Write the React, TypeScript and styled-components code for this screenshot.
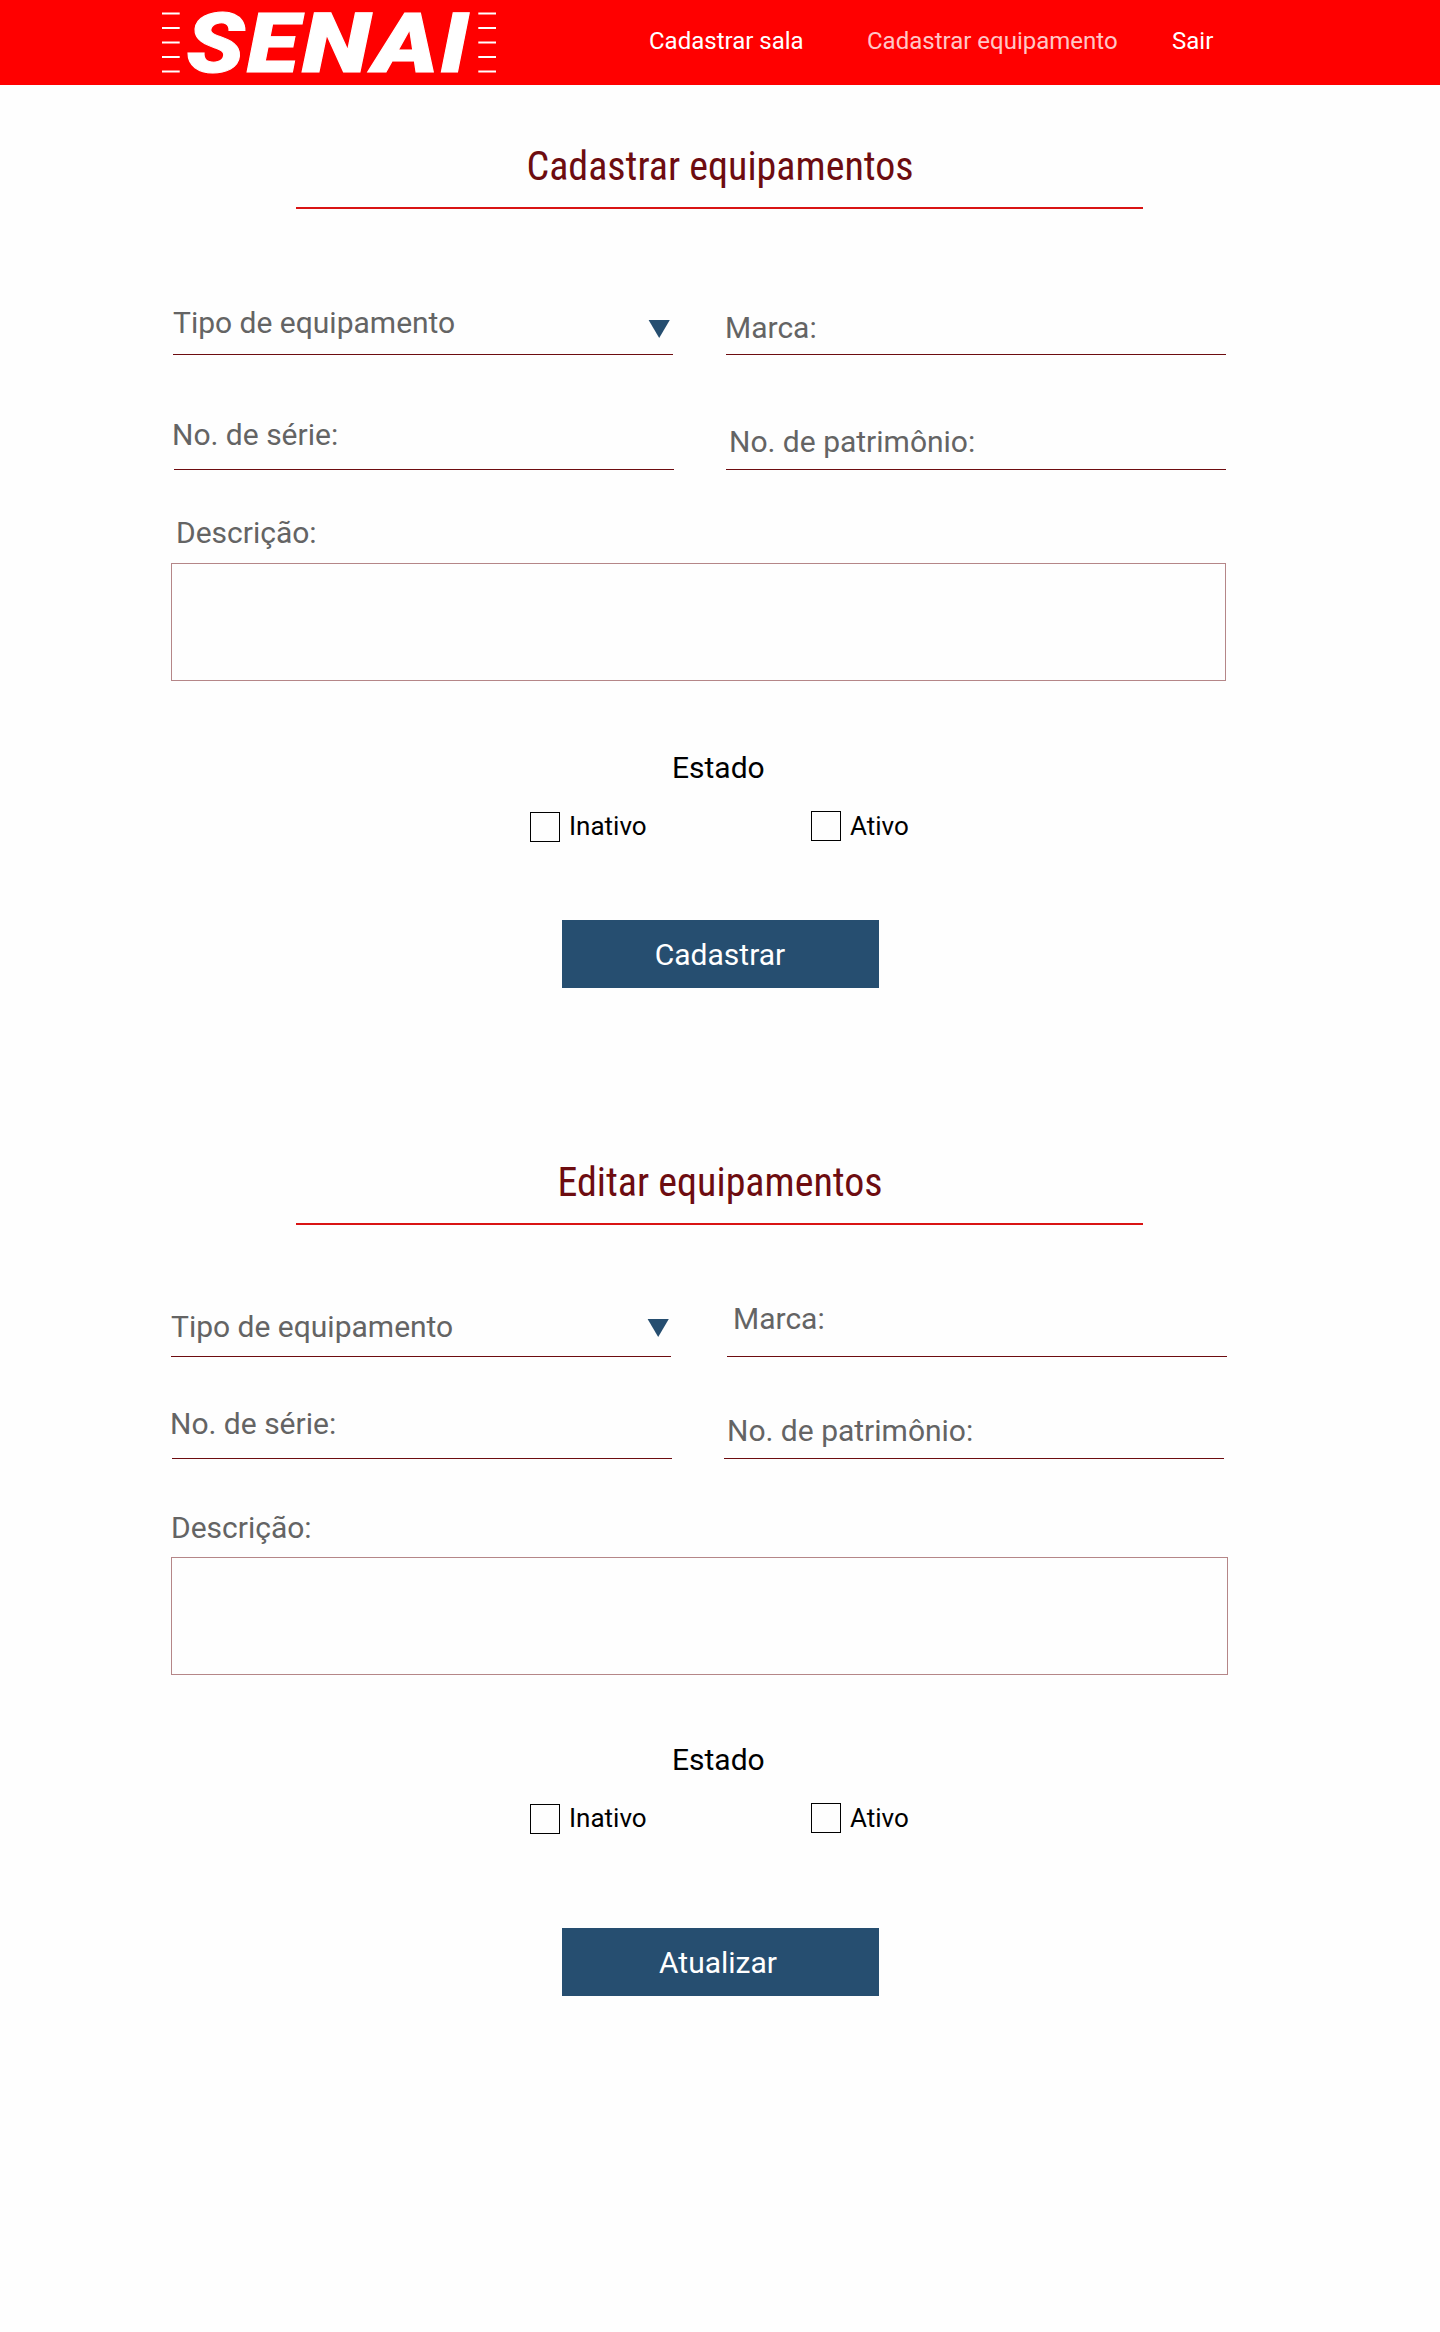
import React from "react";
import styled, { createGlobalStyle } from "styled-components";

const GlobalStyle = createGlobalStyle`
  *, *::before, *::after { box-sizing: border-box; }
  body { margin: 0; background: #fefefe; font-family: Roboto, "Liberation Sans", sans-serif; }
`;

const Page = styled.div`
  width: 1440px;
  height: 2332px;
  background: #fefefe;
`;

const Header = styled.header`
  display: flex;
  height: 85px;
  padding-left: 162px;
  background: #ff0000;
`;

const Logo = styled.svg`
  flex: none;
  overflow: visible;
  width: 334px;
  height: 85px;
  margin-right: 153px;
`;

const LogoLetter = styled.text`
  font-family: Roboto, "Liberation Sans", sans-serif;
  font-weight: 900;
  font-style: italic;
  font-size: 83px;
  fill: #ffffff;
  stroke: #ffffff;
  stroke-width: 1px;
`;

const Nav = styled.nav`
  display: grid;
  grid-template-columns: 218px 305px auto;
  padding-top: 27px;
`;

const NavLink = styled.a<{ $current?: boolean }>`
  font-size: 24px;
  line-height: 28px;
  white-space: nowrap;
  text-decoration: none;
  color: ${(p) => (p.$current ? "#ffc6c6" : "#ffffff")};
`;

const Section = styled.section<{ $top: number }>`
  display: flex;
  flex-direction: column;
  align-items: flex-start;
  padding-top: ${(p) => p.$top}px;
`;

const Title = styled.h1`
  width: 847px;
  margin: 0 0 0 296px;
  padding: 0 0 17px 1px;
  border-bottom: 2px solid #d91414;
  font-family: "Roboto Condensed", Roboto, sans-serif;
  font-stretch: condensed;
  font-weight: 400;
  font-size: 40px;
  line-height: 47px;
  text-align: center;
  color: #6d0c10;
`;

const Row = styled.div<{ $top: number; $left: number; $gap: number }>`
  display: flex;
  gap: ${(p) => p.$gap}px;
  margin: ${(p) => p.$top}px 0 0 ${(p) => p.$left}px;
`;

const Field = styled.div`
  display: flex;
  align-items: flex-end;
  justify-content: space-between;
  width: 500px;
  height: 60px;
  border-bottom: 1px solid #6d0c10;
`;

const Label = styled.label<{ $inset: number; $lift: number }>`
  margin: 0 0 ${(p) => p.$lift}px ${(p) => p.$inset}px;
  font-size: 30px;
  line-height: 35px;
  white-space: nowrap;
  color: #646464;
`;

const Arrow = styled.svg<{ $lift: number; $right: number }>`
  width: 22px;
  height: 18px;
  margin: 0 ${(p) => p.$right}px ${(p) => p.$lift}px 0;
  fill: #264e70;
`;

const DescriptionLabel = styled(Label)<{ $top: number }>`
  margin-top: ${(p) => p.$top}px;
`;

const DescriptionBox = styled.div<{ $width: number }>`
  width: ${(p) => p.$width}px;
  height: 118px;
  margin-left: 171px;
  border: 1px solid #b58688;
`;

const StateTitle = styled.h2<{ $top: number }>`
  margin: ${(p) => p.$top}px 0 0 672px;
  font-weight: 400;
  font-size: 30px;
  line-height: 35px;
  color: #000000;
`;

const Choices = styled.div`
  display: grid;
  grid-template-columns: 281px auto;
  height: 31px;
  margin: 26px 0 0 530px;
`;

const Choice = styled.label<{ $low?: boolean }>`
  display: flex;
  gap: 9px;
  align-items: ${(p) => (p.$low ? "flex-end" : "flex-start")};
  font-size: 26px;
  line-height: 30px;
  color: #000000;
`;

const Check = styled.span`
  width: 30px;
  height: 30px;
  border: 1px solid #000000;
`;

const ChoiceText = styled.span`
  height: 31px;
`;

const Submit = styled.button<{ $top: number; $shift: number }>`
  width: 317px;
  height: 68px;
  margin: ${(p) => p.$top}px 0 0 562px;
  padding: 0 ${(p) => p.$shift}px 0 0;
  border: 0;
  background: #264e70;
  color: #ffffff;
  font-family: inherit;
  font-size: 30px;
  line-height: 35px;
`;

type FieldSpec = { label: string; inset: number; lift: number };
type FormRow = { top: number; left: number; gap: number; fields: FieldSpec[] };
type FormSpec = {
  title: string;
  top: number;
  rows: FormRow[];
  arrow: { lift: number; right: number };
  description: { top: number; left: number; gap: number; width: number };
  stateTop: number;
  submitTop: number;
  submitShift: number;
  submit: string;
};

const forms: FormSpec[] = [
  {
    title: "Cadastrar equipamentos",
    top: 58,
    arrow: { lift: 16, right: 3 },
    rows: [
      {
        top: 86, left: 173, gap: 53,
        fields: [
          { label: "Tipo de equipamento", inset: 0, lift: 14 },
          { label: "Marca:", inset: -1, lift: 9 },
        ],
      },
      {
        top: 55, left: 174, gap: 52,
        fields: [
          { label: "No. de série:", inset: -2, lift: 17 },
          { label: "No. de patrimônio:", inset: 3, lift: 10 },
        ],
      },
    ],
    description: { top: 45, left: 176, gap: 13, width: 1055 },
    stateTop: 69,
    submitTop: 78,
    submitShift: 1,
    submit: "Cadastrar",
  },
  {
    title: "Editar equipamentos",
    top: 171,
    arrow: { lift: 19, right: 2 },
    rows: [
      {
        top: 72, left: 171, gap: 56,
        fields: [
          { label: "Tipo de equipamento", inset: 0, lift: 12 },
          { label: "Marca:", inset: 6, lift: 20 },
        ],
      },
      {
        top: 42, left: 172, gap: 52,
        fields: [
          { label: "No. de série:", inset: -2, lift: 17 },
          { label: "No. de patrimônio:", inset: 3, lift: 10 },
        ],
      },
    ],
    description: { top: 51, left: 171, gap: 12, width: 1057 },
    stateTop: 67,
    submitTop: 94,
    submitShift: 5,
    submit: "Atualizar",
  },
];

const dashes = [13.6, 28, 42.5, 57, 71.5];

// Each letter of the wordmark: character, x position, horizontal stretch.
const letters: [string, number, number][] = [
  ["S", 24.6, 1.146],
  ["E", 85.1, 1.146],
  ["N", 140.1, 1.206],
  ["A", 211.2, 1.185],
  ["I", 278.2, 1.155],
];

function SenaiLogo() {
  return (
    <Logo viewBox="0 0 334 85">
      {dashes.map((y) => (
        <path key={y} d={`M0 ${y}H17.7M316.3 ${y}H334`} stroke="#fff" strokeWidth="2" />
      ))}
      {letters.map(([ch, x, sx]) => (
        <LogoLetter key={ch} transform={`translate(${x} 72.2) scale(${sx} 1)`}>
          {ch}
        </LogoLetter>
      ))}
    </Logo>
  );
}

function EquipmentForm({ spec }: { spec: FormSpec }) {
  const d = spec.description;
  return (
    <Section $top={spec.top}>
      <Title>{spec.title}</Title>
      {spec.rows.map((row, r) => (
        <Row key={r} $top={row.top} $left={row.left} $gap={row.gap}>
          {row.fields.map((f, i) => (
            <Field key={f.label}>
              <Label $inset={f.inset} $lift={f.lift}>{f.label}</Label>
              {r === 0 && i === 0 && (
                <Arrow viewBox="0 0 22 18" $lift={spec.arrow.lift} $right={spec.arrow.right}>
                  <path d="M0.6 0H21.8L11.2 18Z" />
                </Arrow>
              )}
            </Field>
          ))}
        </Row>
      ))}
      <DescriptionLabel $top={d.top} $inset={d.left} $lift={d.gap}>Descrição:</DescriptionLabel>
      <DescriptionBox $width={d.width} />
      <StateTitle $top={spec.stateTop}>Estado</StateTitle>
      <Choices>
        <Choice $low><Check /><ChoiceText>Inativo</ChoiceText></Choice>
        <Choice><Check /><ChoiceText>Ativo</ChoiceText></Choice>
      </Choices>
      <Submit $top={spec.submitTop} $shift={spec.submitShift}>{spec.submit}</Submit>
    </Section>
  );
}

export default function App() {
  return (
    <Page>
      <GlobalStyle />
      <Header>
        <SenaiLogo />
        <Nav>
          <NavLink>Cadastrar sala</NavLink>
          <NavLink $current>Cadastrar equipamento</NavLink>
          <NavLink>Sair</NavLink>
        </Nav>
      </Header>
      {forms.map((spec) => (
        <EquipmentForm key={spec.title} spec={spec} />
      ))}
    </Page>
  );
}
